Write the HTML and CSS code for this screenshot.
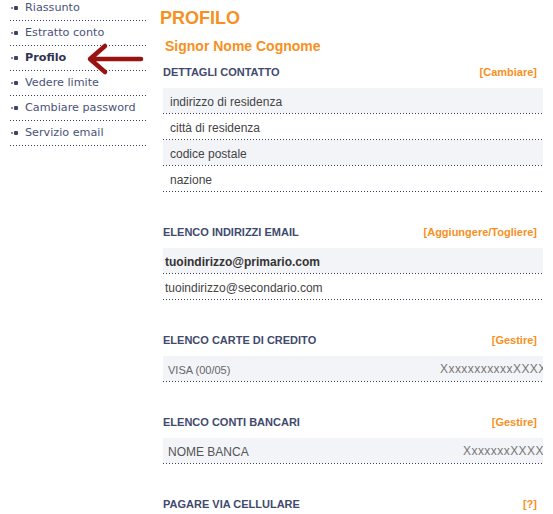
FILE: index.html
```html
<!DOCTYPE html>
<html lang="it">
<head>
    <meta charset="UTF-8">
    <meta name="viewport" content="width=device-width, initial-scale=1.0">
    <title>Profilo</title>
    <link rel="stylesheet" href="styles.css">
</head>
<body>

    <div class="page">
        <!-- Left navigation -->
        <ul class="side-nav">
            <li><span class="bullet"></span><a href="#">Riassunto</a></li>
            <li><span class="bullet"></span><a href="#">Estratto conto</a></li>
            <li class="active"><span class="bullet"></span><a href="#">Profilo</a></li>
            <li><span class="bullet"></span><a href="#">Vedere limite</a></li>
            <li><span class="bullet"></span><a href="#">Cambiare password</a></li>
            <li><span class="bullet"></span><a href="#">Servizio email</a></li>
        </ul>

        <!-- Red pointer next to the current page -->
        <svg class="pointer" width="58" height="34" viewBox="0 0 58 34">
            <path d="M55 17 H6 M19 4 L4 17 L19 30" fill="none" stroke="#9a1111" stroke-width="4.5" stroke-linecap="round" stroke-linejoin="round"/>
        </svg>

        <div class="content">
            <h1>PROFILO</h1>
            <h2 class="owner">Signor Nome Cognome</h2>

            <div class="section first">
                <div class="section-head">
                    <span>DETTAGLI CONTATTO</span>
                    <a href="#">[Cambiare]</a>
                </div>
                <div class="row shaded address">indirizzo di residenza</div>
                <div class="row address">città di residenza</div>
                <div class="row shaded address">codice postale</div>
                <div class="row address">nazione</div>
            </div>

            <div class="section">
                <div class="section-head">
                    <span>ELENCO INDIRIZZI EMAIL</span>
                    <a href="#">[Aggiungere/Togliere]</a>
                </div>
                <div class="row shaded email primary">tuoindirizzo@primario.com</div>
                <div class="row email">tuoindirizzo@secondario.com</div>
            </div>

            <div class="section">
                <div class="section-head">
                    <span>ELENCO CARTE DI CREDITO</span>
                    <a href="#">[Gestire]</a>
                </div>
                <div class="row shaded account card">
                    <span class="label">VISA (00/05)</span>
                    <span class="mask">XxxxxxxxxxxXXXX</span>
                </div>
            </div>

            <div class="section">
                <div class="section-head">
                    <span>ELENCO CONTI BANCARI</span>
                    <a href="#">[Gestire]</a>
                </div>
                <div class="row shaded account bank">
                    <span class="label">NOME BANCA</span>
                    <span class="mask">XxxxxxxXXXX</span>
                </div>
            </div>

            <div class="section">
                <div class="section-head">
                    <span>PAGARE VIA CELLULARE</span>
                    <a href="#">[?]</a>
                </div>
            </div>
        </div>
    </div>

</body>
</html>
```

FILE: styles.css
```css
/* Page base */
html, body {
    overflow: hidden;
}

body {
    margin: 0;
    background-color: #ffffff;
    font-family: 'Liberation Sans', Arial, sans-serif;
    color: #444;
}

.page {
    position: relative;
    display: flex;
    align-items: flex-start;
}

/* Left navigation */
.side-nav {
    list-style: none;
    margin: -4px 0 0 10px;
    padding: 0;
    width: 136px;
    flex: none;
}

.side-nav li {
    display: flex;
    align-items: center;
    height: 25px;
    padding-bottom: 1px;
    box-sizing: border-box;
    background: linear-gradient(to right, #3b3f5c 1px, transparent 1px) left bottom / 3px 1px repeat-x;
}

.side-nav a {
    font-family: 'DejaVu Sans', Verdana, sans-serif;
    font-size: 11.2px;
    line-height: 24px;
    color: #4b5379;
    text-decoration: none;
}

.side-nav .active a {
    font-weight: bold;
    color: #2f3552;
}

/* small two-dot bullet */
.bullet {
    position: relative;
    width: 7px;
    height: 4px;
    margin: 0 7px 0 1px;
}

.bullet::before,
.bullet::after {
    content: "";
    position: absolute;
    background-color: #3d4468;
}

.bullet::before {
    left: 0;
    top: 1px;
    width: 2px;
    height: 2px;
    opacity: 0.6;
}

.bullet::after {
    left: 3px;
    top: 0;
    width: 4px;
    height: 4px;
    border-radius: 1px;
}

.pointer {
    position: absolute;
    left: 86px;
    top: 42px;
}

/* Main column */
.content {
    margin-left: 14px;
    padding-top: 8px;
    width: 383px;
    flex: none;
}

h1 {
    margin: 0;
    font-size: 18px;
    line-height: 20px;
    color: #f7901e;
}

.owner {
    margin: 10px 0 0 5px;
    font-size: 14px;
    line-height: 16px;
    color: #f7901e;
}

.section {
    margin: 32px 0 0 3px;
}

.section.first {
    margin-top: 10px;
}

.section-head {
    display: flex;
    justify-content: space-between;
    padding: 0 6px 8px 0;
    font-size: 11px;
    line-height: 16px;
    font-weight: bold;
    color: #3f4a6e;
}

.section-head a {
    color: #f7901e;
    text-decoration: none;
}

/* Data rows with dotted separator */
.row {
    height: 26px;
    box-sizing: border-box;
    padding: 3px 7px 1px;
    line-height: 22px;
    font-size: 12px;
    color: #444;
    white-space: nowrap;
    overflow: hidden;
    background: linear-gradient(to right, #3b3f5c 1px, transparent 1px) left bottom / 3px 1px repeat-x;
}

.row.shaded {
    background:
        linear-gradient(to right, #3b3f5c 1px, transparent 1px) left bottom / 3px 1px repeat-x,
        linear-gradient(#f3f4f8, #f3f4f8) left top / 100% calc(100% - 1px) no-repeat;
}

.email {
    padding-left: 2px;
}

.email.primary {
    font-weight: bold;
    color: #333;
}

.account {
    display: flex;
    padding-left: 5px;
    padding-right: 0;
}

.account .label {
    flex: none;
}

.card .label {
    width: 272px;
    font-size: 11px;
    color: #666;
}

.bank .label {
    width: 295px;
    color: #555;
}

.mask {
    flex: none;
    color: #777;
    line-height: 20px;
    letter-spacing: 0.45px;
}
```
